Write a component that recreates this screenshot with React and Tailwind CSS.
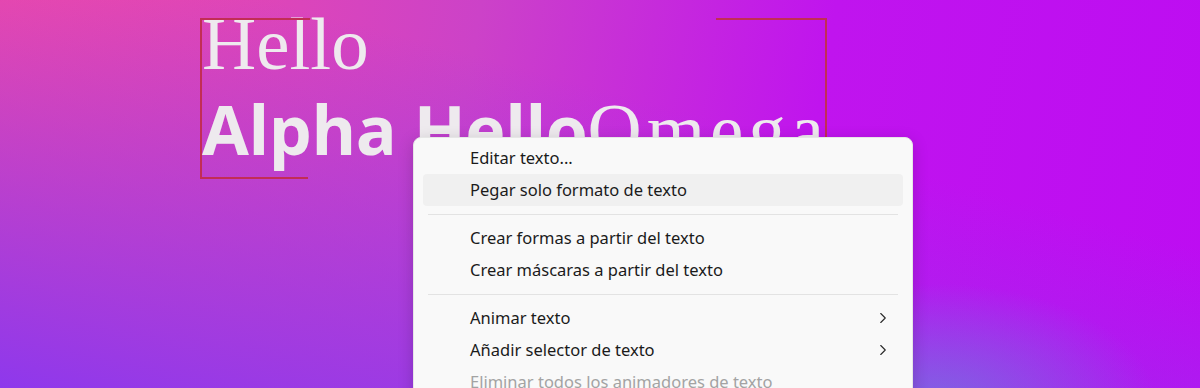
import React from 'react';
import { ChevronRight } from 'lucide-react';

const menuFont = { fontFamily: '"Segoe UI", "Noto Sans", sans-serif' };

function MenuItem({ label, active, submenu, disabled }) {
  return (
    <div
      className={`mx-[9px] flex h-8 items-center rounded-[4px] pl-[47px] pr-[11px] text-[16.5px] ${
        active ? 'bg-[#f0f0f0]' : ''
      } ${disabled ? 'text-[#a3a3a3]' : 'text-[#1b1b1b]'}`}
    >
      <span className="flex-1">{label}</span>
      {submenu && <ChevronRight size={18} strokeWidth={1.5} className="text-[#2a2a2a]" />}
    </div>
  );
}

function Separator() {
  return <div className="mx-[14px] mb-[7px] mt-2 h-px bg-[#e3e3e3]" />;
}

export default function App() {
  return (
    <div
      className="relative h-[388px] w-[1200px] overflow-hidden bg-[radial-gradient(ellipse_220px_120px_at_78%_104%,rgba(120,110,225,0.85),rgba(120,110,225,0)),linear-gradient(195deg,rgba(142,56,236,0)_35%,rgba(142,56,236,1)_100%),linear-gradient(100deg,#f44aa5_0%,#cc42c8_38%,#c014ee_66%,#bd0cf2_100%)]"
    >
      {/* text on the canvas */}
      <div className="pl-[202px] pt-[6px] text-[#eeeaee]">
        <div className="h-[75px] text-[75px] leading-none" style={{ fontFamily: '"Liberation Serif", serif' }}>
          Hello
        </div>
        <div className="mt-[11px] flex items-baseline leading-none">
          <span className="text-[68px] font-bold tracking-[-0.4px]" style={{ fontFamily: '"Open Sans", sans-serif' }}>
            Alpha Hello
          </span>
          <span className="text-[75px] tracking-[5px]" style={{ fontFamily: '"Liberation Serif", serif' }}>
            Omega
          </span>
        </div>
      </div>

      {/* selection corner marks */}
      <div className="absolute left-[200px] top-[18px] h-[161px] w-[110px] border-l-2 border-t-2 border-[#c22d55]" />
      <div className="absolute left-[200px] top-[177px] h-[2px] w-[108px] bg-[#c22d55]" />
      <div className="absolute left-[716px] top-[18px] h-[161px] w-[111px] border-r-2 border-t-2 border-[#c22d55]" />

      {/* context menu */}
      <div
        className="absolute left-[413px] top-[137px] w-[500px] rounded-lg border border-[#e6e6e6] bg-[#f9f9f9] pt-1 pb-3 shadow-[0_4px_16px_rgba(0,0,0,0.18)]"
        style={menuFont}
      >
        <MenuItem label="Editar texto..." />
        <MenuItem label="Pegar solo formato de texto" active />
        <Separator />
        <MenuItem label="Crear formas a partir del texto" />
        <MenuItem label="Crear máscaras a partir del texto" />
        <Separator />
        <MenuItem label="Animar texto" submenu />
        <MenuItem label="Añadir selector de texto" submenu />
        <MenuItem label="Eliminar todos los animadores de texto" disabled />
      </div>
    </div>
  );
}
